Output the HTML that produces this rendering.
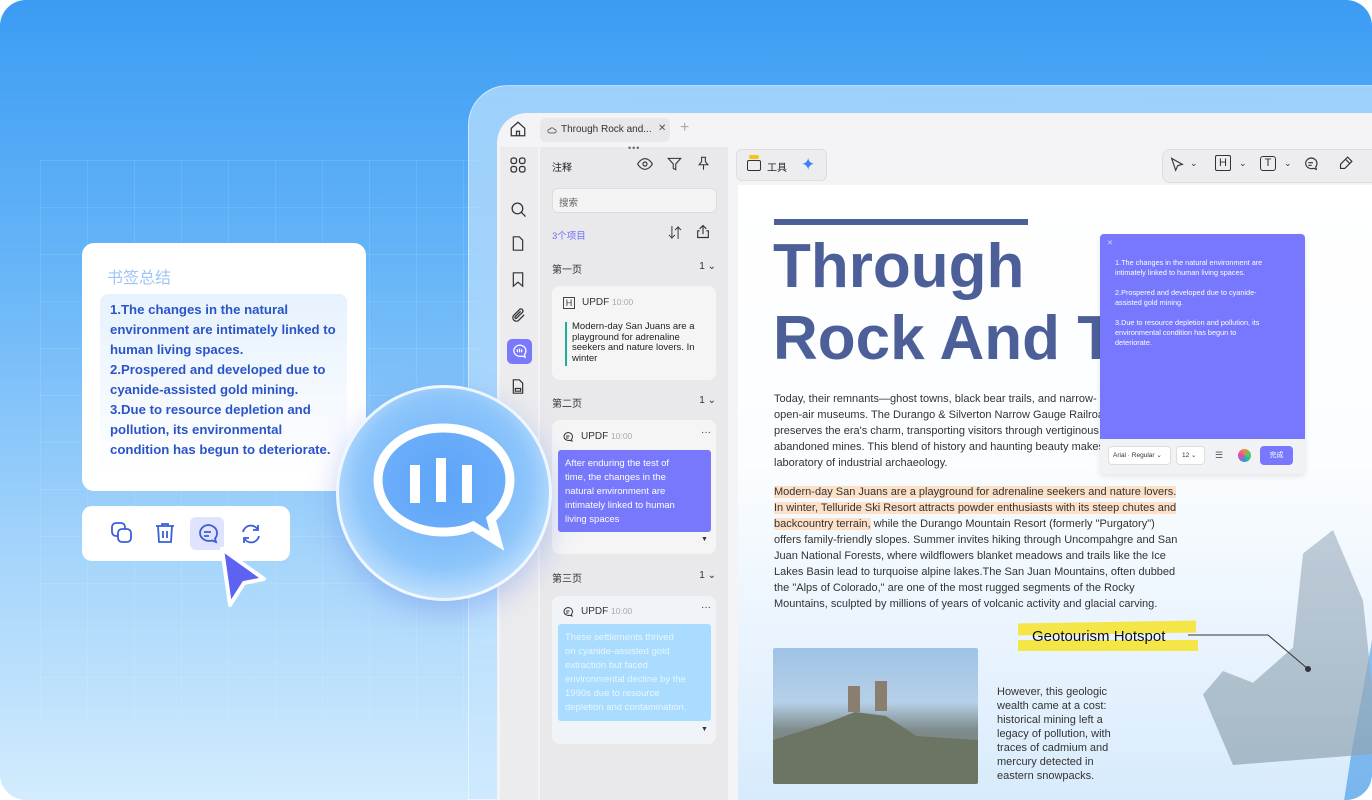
<!DOCTYPE html>
<html><head><meta charset="utf-8">
<style>
*{margin:0;padding:0;box-sizing:border-box}
html,body{width:1372px;height:800px;overflow:hidden}
body{background:#fff;font-family:"Liberation Sans","Noto Sans CJK SC",sans-serif}
#bg{position:absolute;left:0;top:0;width:1372px;height:800px;border-radius:26px;overflow:hidden;background:linear-gradient(180deg,#3b9cf3 0%,#69b6f8 35%,#a6d5fb 70%,#d2ecfd 100%)}
.grid{position:absolute;left:40px;top:160px;width:440px;height:560px;background-image:linear-gradient(rgba(255,255,255,.1) 1px,transparent 1px),linear-gradient(90deg,rgba(255,255,255,.1) 1px,transparent 1px);background-size:47px 47px}
.abs{position:absolute}
.frame{left:468px;top:85px;width:940px;height:715px;border-radius:40px 0 0 0;background:linear-gradient(180deg,rgba(215,238,255,.6),rgba(200,230,255,.35));border:1px solid rgba(255,255,255,.5)}
.win{left:497px;top:113px;width:875px;height:687px;border-radius:30px 0 0 0;background:#f4f4f6;overflow:hidden}
.side{left:3px;top:34px;width:38px;height:660px;background:#ececee}
.panel{left:43px;top:34px;width:188px;height:660px;background:#e9e9ec}
.doc{left:241px;top:72px;width:640px;height:620px;background:linear-gradient(180deg,#fff 0%,#fbfdff 45%,#e2f0fd 85%,#d6eafc 100%);overflow:hidden}
.card{position:absolute;left:12px;width:164px;background:#f5f5f6;border-radius:8px}
.ph{position:absolute;left:12px;font-size:10px;color:#333}
.cnt{position:absolute;right:12px;font-size:10px;color:#333}
.doctext{position:absolute;left:36px;font-size:11px;line-height:16px;color:#333;white-space:nowrap}
.hl{background:#fde0c8}
svg{display:block}
</style></head><body>
<div id="bg">
<div class="grid"></div>

<div class="abs" style="left:82px;top:243px;width:284px;height:248px;background:#fff;border-radius:12px"></div>
<div class="abs" style="left:107px;top:264px;font-size:16px;color:#9ec5f7">书签总结</div>
<div class="abs" style="left:100px;top:294px;width:247px;height:180px;border-radius:8px;background:linear-gradient(180deg,#e6f2fe,#fff)"></div>
<div class="abs" style="left:110px;top:300px;font-size:13.2px;line-height:20px;color:#2b54c9;font-weight:bold;white-space:nowrap">1.The changes in the natural<br>environment are intimately linked to<br>human living spaces.<br>2.Prospered and developed due to<br>cyanide-assisted gold mining.<br>3.Due to resource depletion and<br>pollution, its environmental<br>condition has begun to deteriorate.</div>

<div class="abs" style="left:82px;top:506px;width:208px;height:55px;background:#fff;border-radius:10px"></div>
<svg class="abs" style="left:110px;top:521px" width="24" height="24" viewBox="0 0 24 24" fill="none" stroke="#3a5fd9" stroke-width="1.8"><rect x="2" y="2" width="13" height="13" rx="4"/><rect x="8" y="8" width="13" height="13" rx="4" fill="#fff"/></svg>
<svg class="abs" style="left:153px;top:521px" width="24" height="24" viewBox="0 0 24 24" fill="none" stroke="#3a5fd9" stroke-width="1.8"><path d="M3 5h18M9 5V3h6v2M5 5l1 16h12l1-16M10 10v7M14 10v7"/></svg>
<div class="abs" style="left:190px;top:517px;width:34px;height:33px;background:#dfe3fd;border-radius:6px"></div>
<svg class="abs" style="left:196px;top:522px" width="24" height="24" viewBox="0 0 24 24" fill="none" stroke="#3a5fd9" stroke-width="1.8"><path d="M12 3a9 8 0 1 0 4 15.5l4 1.5-1-3.5A8 8 0 0 0 21 11a9 8 0 0 0-9-8z"/><path d="M8 10h7M8 14h5"/></svg>
<svg class="abs" style="left:239px;top:522px" width="24" height="24" viewBox="0 0 24 24" fill="none" stroke="#3a5fd9" stroke-width="1.8"><path d="M4 10a8 8 0 0 1 15-2M20 14a8 8 0 0 1-15 2"/><path d="M19 3v5h-5M5 21v-5h5"/></svg>
<svg class="abs" style="left:212px;top:545px" width="58" height="65" viewBox="0 0 58 65"><path d="M10 4 L52 34 L32 38 L18 60 Z" fill="#5d63f0" stroke="#fff" stroke-width="4" stroke-linejoin="round"/></svg>

<div class="abs frame"></div>
<div class="abs win">
  <svg class="abs" style="left:12px;top:7px" width="18" height="18" viewBox="0 0 24 24" fill="none" stroke="#333" stroke-width="1.7"><path d="M3 11l9-8 9 8v10H3z"/><path d="M10 21v-6h4v6"/></svg>
  <div class="abs" style="left:43px;top:5px;width:130px;height:24px;background:#e8e8ea;border-radius:6px"></div>
  <svg class="abs" style="left:50px;top:12px" width="10" height="10" viewBox="0 0 24 24" fill="none" stroke="#555" stroke-width="2"><path d="M6 19h12a4 4 0 0 0 0-8 6 6 0 0 0-11-1 4 4 0 0 0-1 9z"/></svg>
  <div class="abs" style="left:64px;top:11px;font-size:10px;color:#333">Through Rock and...</div>
  <div class="abs" style="left:161px;top:10px;font-size:10px;color:#555">✕</div>
  <div class="abs" style="left:183px;top:6px;font-size:16px;color:#aaa">+</div>

  <div class="abs side"></div>
  <div class="abs panel"></div>
  <svg class="abs" style="left:13px;top:44px" width="16" height="16" viewBox="0 0 16 16" fill="none" stroke="#333" stroke-width="1.3"><rect x="1" y="1" width="5.5" height="5.5" rx="2"/><rect x="9.5" y="1" width="5.5" height="5.5" rx="2"/><rect x="1" y="9.5" width="5.5" height="5.5" rx="2"/><rect x="9.5" y="9.5" width="5.5" height="5.5" rx="2"/></svg>
  <svg class="abs" style="left:13px;top:88px" width="17" height="17" viewBox="0 0 24 24" fill="none" stroke="#333" stroke-width="1.8"><circle cx="10.5" cy="10.5" r="7.5"/><path d="M16 16l6 6"/></svg>
  <svg class="abs" style="left:13px;top:122px" width="16" height="17" viewBox="0 0 24 24" fill="none" stroke="#333" stroke-width="1.8"><path d="M5 2h9l5 5v15H5z"/></svg>
  <svg class="abs" style="left:13px;top:158px" width="16" height="17" viewBox="0 0 24 24" fill="none" stroke="#333" stroke-width="1.8"><path d="M5 2h14v20l-7-6-7 6z"/></svg>
  <svg class="abs" style="left:13px;top:194px" width="17" height="17" viewBox="0 0 24 24" fill="none" stroke="#333" stroke-width="1.8"><path d="M20 11l-8 8a5 5 0 0 1-7-7l9-9a3 3 0 0 1 4 4l-9 9a1.5 1.5 0 0 1-2-2l8-8"/></svg>
  <div class="abs" style="left:10px;top:226px;width:25px;height:25px;background:#7879fb;border-radius:5px"></div>
  <svg class="abs" style="left:14px;top:230px" width="17" height="17" viewBox="0 0 24 24" fill="none" stroke="#fff" stroke-width="1.8"><path d="M12 3a9 8 0 1 0 4 15.5l4 1.5-1-3.5A8 8 0 0 0 21 11a9 8 0 0 0-9-8z"/><path d="M9 9v4M12 8v5M15 9v4"/></svg>
  <svg class="abs" style="left:13px;top:265px" width="16" height="17" viewBox="0 0 24 24" fill="none" stroke="#333" stroke-width="1.8"><path d="M5 2h9l5 5v15H5z"/><path d="M8 15h8v4H8z"/></svg>

  <div class="abs" style="left:131px;top:30px;font-size:9px;color:#666;letter-spacing:1px">•••</div>
  <div class="abs" style="left:55px;top:46px;font-size:10px;color:#222">注释</div>
  <svg class="abs" style="left:140px;top:44px" width="16" height="14" viewBox="0 0 24 20" fill="none" stroke="#333" stroke-width="1.7"><path d="M1 10s4-8 11-8 11 8 11 8-4 8-11 8S1 10 1 10z"/><circle cx="12" cy="10" r="3"/></svg>
  <svg class="abs" style="left:170px;top:43px" width="15" height="16" viewBox="0 0 24 24" fill="none" stroke="#333" stroke-width="1.7"><path d="M2 3h20l-8 9v9l-4-2v-7z"/></svg>
  <svg class="abs" style="left:199px;top:42px" width="15" height="17" viewBox="0 0 24 24" fill="none" stroke="#333" stroke-width="1.7"><path d="M8 2h8M9 2v7l-4 5h14l-4-5V2M12 14v8"/></svg>
  <div class="abs" style="left:55px;top:75px;width:165px;height:25px;background:#f4f4f5;border:1px solid #ddd;border-radius:6px"></div>
  <div class="abs" style="left:62px;top:82px;font-size:9.5px;color:#666">搜索</div>
  <div class="abs" style="left:55px;top:115px;font-size:9.5px;color:#6b6ff5">3个项目</div>
  <div class="abs" style="left:171px;top:110px;font-size:14px;color:#333">⇵</div>
  <svg class="abs" style="left:198px;top:110px" width="16" height="17" viewBox="0 0 24 24" fill="none" stroke="#333" stroke-width="1.7"><path d="M12 3v13M7 8l5-5 5 5M7 11H4v10h16V11h-3"/></svg>

  <div class="abs" style="left:43px;top:148px;width:188px;height:530px">
    <div class="ph" style="top:0">第一页</div><div class="cnt" style="top:0">1 ⌄</div>
    <div class="card" style="top:25px;height:94px"></div>
    <div class="abs" style="left:23px;top:36px;width:12px;height:12px;border:1px solid #444;font-size:9px;line-height:10px;text-align:center;color:#333">H</div>
    <div class="abs" style="left:42px;top:36px;font-size:10px;color:#333">UPDF <span style="color:#aaa;font-size:8.5px">10:00</span></div>
    <div class="abs" style="left:25px;top:61px;width:2px;height:44px;background:#1fae9a"></div>
    <div class="abs" style="left:32px;top:61px;font-size:9.5px;line-height:10.5px;color:#222;white-space:nowrap">Modern-day San Juans are a<br>playground for adrenaline<br>seekers and nature lovers. In<br>winter</div>

    <div class="ph" style="top:134px">第二页</div><div class="cnt" style="top:134px">1 ⌄</div>
    <div class="card" style="top:159px;height:134px"></div>
    <svg class="abs" style="left:22px;top:170px" width="12" height="12" viewBox="0 0 24 24" fill="none" stroke="#333" stroke-width="2"><path d="M12 3a9 8 0 1 0 4 15.5l4 1.5-1-3.5A8 8 0 0 0 21 11a9 8 0 0 0-9-8z"/><path d="M8 10h7M8 14h5"/></svg>
    <div class="abs" style="left:41px;top:170px;font-size:10px;color:#333">UPDF <span style="color:#aaa;font-size:8.5px">10:00</span></div>
    <div class="abs" style="left:161px;top:166px;font-size:10px;color:#333">···</div>
    <div class="abs" style="left:18px;top:189px;width:153px;height:82px;background:#7778fb;border-radius:3px"></div>
    <div class="abs" style="left:25px;top:196px;font-size:9.5px;line-height:14px;color:#fff;white-space:nowrap">After enduring the test of<br>time, the changes in the<br>natural environment are<br>intimately linked to human<br>living spaces</div>
    <div class="abs" style="left:161px;top:275px;font-size:7px;color:#333">▼</div>

    <div class="ph" style="top:309px">第三页</div><div class="cnt" style="top:309px">1 ⌄</div>
    <div class="card" style="top:335px;height:148px;background:#f0f3f7"></div>
    <svg class="abs" style="left:22px;top:345px" width="12" height="12" viewBox="0 0 24 24" fill="none" stroke="#333" stroke-width="2"><path d="M12 3a9 8 0 1 0 4 15.5l4 1.5-1-3.5A8 8 0 0 0 21 11a9 8 0 0 0-9-8z"/><path d="M8 10h7M8 14h5"/></svg>
    <div class="abs" style="left:41px;top:345px;font-size:10px;color:#333">UPDF <span style="color:#aaa;font-size:8.5px">10:00</span></div>
    <div class="abs" style="left:161px;top:341px;font-size:10px;color:#333">···</div>
    <div class="abs" style="left:18px;top:363px;width:153px;height:97px;background:#a9dcfe;border-radius:3px"></div>
    <div class="abs" style="left:25px;top:370px;font-size:9.5px;line-height:14px;color:#e9f6ff;white-space:nowrap">These settlements thrived<br>on cyanide-assisted gold<br>extraction but faced<br>environmental decline by the<br>1990s due to resource<br>depletion and contamination.</div>
    <div class="abs" style="left:161px;top:465px;font-size:7px;color:#333">▼</div>
  </div>

  <div class="abs" style="left:239px;top:36px;width:91px;height:32px;background:#ededef;border:1px solid #ddd;border-radius:6px"></div>
  <div class="abs" style="left:250px;top:47px;width:14px;height:11px;border:1.5px solid #333;border-radius:2px"></div>
  <div class="abs" style="left:252px;top:42px;width:10px;height:4px;background:#f5c518;border-radius:2px"></div>
  <div class="abs" style="left:270px;top:46px;font-size:10px;color:#222">工具</div>
  <div class="abs" style="left:304px;top:42px;font-size:17px;color:#3b82f6">✦</div>
  <div class="abs" style="left:665px;top:36px;width:260px;height:34px;background:#ededef;border:1px solid #ddd;border-radius:8px"></div>
  <svg class="abs" style="left:672px;top:44px" width="16" height="16" viewBox="0 0 24 24" fill="none" stroke="#333" stroke-width="1.7"><path d="M4 2l16 9-7 2-3 7z"/></svg>
  <div class="abs" style="left:693px;top:45px;font-size:9px;color:#333">⌄</div>
  <div class="abs" style="left:718px;top:42px;width:16px;height:16px;border:1.4px solid #333;border-radius:2px;font-size:11px;line-height:14px;text-align:center;color:#333">H</div>
  <div class="abs" style="left:742px;top:45px;font-size:9px;color:#333">⌄</div>
  <div class="abs" style="left:763px;top:43px;width:16px;height:15px;border:1.4px solid #333;border-radius:3px;font-size:11px;line-height:13px;text-align:center;color:#333">T</div>
  <div class="abs" style="left:787px;top:45px;font-size:9px;color:#333">⌄</div>
  <svg class="abs" style="left:806px;top:43px" width="16" height="16" viewBox="0 0 24 24" fill="none" stroke="#333" stroke-width="1.7"><path d="M12 3a9 8 0 1 0 4 15.5l4 1.5-1-3.5A8 8 0 0 0 21 11a9 8 0 0 0-9-8z"/><path d="M8 10h7M8 14h5"/></svg>
  <svg class="abs" style="left:840px;top:42px" width="17" height="17" viewBox="0 0 24 24" fill="none" stroke="#333" stroke-width="1.7"><path d="M15 3l6 6-10 10H5v-6z M12 6l6 6"/></svg>

  <div class="abs doc">
    <div class="abs" style="left:36px;top:34px;width:254px;height:6px;background:#4c5f98"></div>
    <div class="abs" style="left:35px;top:46px;font-size:62px;line-height:72px;font-weight:bold;color:#4c5f98;white-space:nowrap">Through<br>Rock And T</div>
    <div class="doctext" style="top:206px">Today, their remnants—ghost towns, black bear trails, and narrow-<br>open-air museums. The Durango &amp; Silverton Narrow Gauge Railroa<br>preserves the era's charm, transporting visitors through vertiginous<br>abandoned mines. This blend of history and haunting beauty makes <span style="color:#bbb">the region a living</span><br>laboratory of industrial archaeology.</div>
    <div class="doctext" style="top:299px"><span class="hl">Modern-day San Juans are a playground for adrenaline seekers and nature lovers.</span><br><span class="hl">In winter, Telluride Ski Resort attracts powder enthusiasts with its steep chutes and</span><br><span class="hl">backcountry terrain,</span> while the Durango Mountain Resort (formerly "Purgatory")<br>offers family-friendly slopes. Summer invites hiking through Uncompahgre and San<br>Juan National Forests, where wildflowers blanket meadows and trails like the Ice<br>Lakes Basin lead to turquoise alpine lakes.The San Juan Mountains, often dubbed<br>the "Alps of Colorado," are one of the most rugged segments of the Rocky<br>Mountains, sculpted by millions of years of volcanic activity and glacial carving.</div>
    <div class="abs" style="left:590px;top:200px;width:120px;height:520px;background:linear-gradient(180deg,#9fcdf5,#6eb0ec);clip-path:polygon(60% 0,100% 0,100% 100%,0 100%,20% 70%,40% 45%,55% 25%)"></div>
    <div class="abs" style="left:455px;top:345px;width:200px;height:235px;background:linear-gradient(180deg,#a8b8c8,#8fa3b0);opacity:.7;clip-path:polygon(55% 10%,70% 0,85% 30%,90% 70%,100% 75%,95% 95%,20% 100%,5% 70%,15% 60%,30% 65%,50% 50%)"></div>
    <div class="abs" style="left:280px;top:437px;width:178px;height:12px;background:#f3e646;transform:rotate(-1deg)"></div>
    <div class="abs" style="left:280px;top:455px;width:180px;height:11px;background:#f3e646"></div>
    <div class="abs" style="left:294px;top:443px;font-size:15px;color:#111">Geotourism Hotspot</div>
    <svg class="abs" style="left:450px;top:445px" width="130" height="45" viewBox="0 0 130 45"><path d="M0 5H80L120 39" fill="none" stroke="#333" stroke-width="1"/><circle cx="120" cy="39" r="3" fill="#334"/></svg>
    <div class="abs" style="left:35px;top:463px;width:205px;height:136px;border-radius:2px;background:linear-gradient(180deg,#9fc3e6 0%,#b5d0e8 40%,#7f8c8c 60%,#6d7a6e 100%);overflow:hidden">
      <div class="abs" style="left:0;top:60px;width:205px;height:80px;background:#6c7564;clip-path:polygon(0 40%,25% 20%,40% 5%,55% 10%,70% 35%,100% 40%,100% 100%,0 100%)"></div>
      <div class="abs" style="left:75px;top:38px;width:12px;height:26px;background:#8a7f6e"></div>
      <div class="abs" style="left:102px;top:33px;width:12px;height:30px;background:#8a7f6e"></div>
    </div>
    <div class="abs" style="left:259px;top:500px;font-size:11px;line-height:14px;color:#333;white-space:nowrap">However, this geologic<br>wealth came at a cost:<br>historical mining left a<br>legacy of pollution, with<br>traces of cadmium and<br>mercury detected in<br>eastern snowpacks.</div>
  </div>

  <div class="abs" style="left:603px;top:121px;width:205px;height:240px;background:#f0f2f5;border-radius:4px;box-shadow:0 2px 6px rgba(0,0,0,.1)"></div>
  <div class="abs" style="left:603px;top:121px;width:205px;height:205px;background:#7778fd;border-radius:4px 4px 0 0"></div>
  <div class="abs" style="left:610px;top:126px;font-size:7px;color:#dde">✕</div>
  <div class="abs" style="left:618px;top:145px;font-size:7.3px;line-height:10px;color:#fff;white-space:nowrap">1.The changes in the natural environment are<br>intimately linked to human living spaces.<br><br>2.Prospered and developed due to cyanide-<br>assisted gold mining.<br><br>3.Due to resource depletion and pollution, its<br>environmental condition has begun to<br>deteriorate.</div>
  <div class="abs" style="left:611px;top:333px;width:63px;height:19px;background:#fff;border:1px solid #ddd;border-radius:4px;font-size:6.5px;line-height:17px;padding-left:4px;color:#333">Arial · Regular ⌄</div>
  <div class="abs" style="left:679px;top:333px;width:29px;height:19px;background:#fff;border:1px solid #ddd;border-radius:4px;font-size:6.5px;line-height:17px;padding-left:5px;color:#333">12 ⌄</div>
  <div class="abs" style="left:718px;top:337px;font-size:9px;color:#555">☰</div>
  <div class="abs" style="left:741px;top:336px;width:13px;height:13px;border-radius:50%;background:conic-gradient(#e84,#4c6,#39d,#e4a,#e84)"></div>
  <div class="abs" style="left:763px;top:333px;width:33px;height:19px;background:#7778fd;border-radius:4px;font-size:7px;line-height:19px;text-align:center;color:#fff">完成</div>
</div>

<div class="abs" style="left:336px;top:385px;width:216px;height:216px;border-radius:50%;background:radial-gradient(circle at 50% 45%,#62aaf8 0%,#8ec6fb 55%,#d7ecfe 85%,#eef7ff 100%);box-shadow:0 10px 30px rgba(90,120,230,.35);border:3px solid rgba(255,255,255,.8)"></div>
<svg class="abs" style="left:370px;top:420px" width="150" height="140" viewBox="0 0 150 140"><path d="M73 8C37 8 8 30 8 60s29 52 65 52c12 0 22-2 30-6l24 15-6-22c12-10 19-24 19-39C140 30 110 8 73 8z" fill="rgba(90,160,250,.55)" stroke="#fff" stroke-width="9"/><rect x="40" y="45" width="10" height="38" fill="#fff"/><rect x="66" y="38" width="10" height="44" fill="#fff"/><rect x="92" y="45" width="10" height="38" fill="#fff"/></svg>
</div>
</body></html>
